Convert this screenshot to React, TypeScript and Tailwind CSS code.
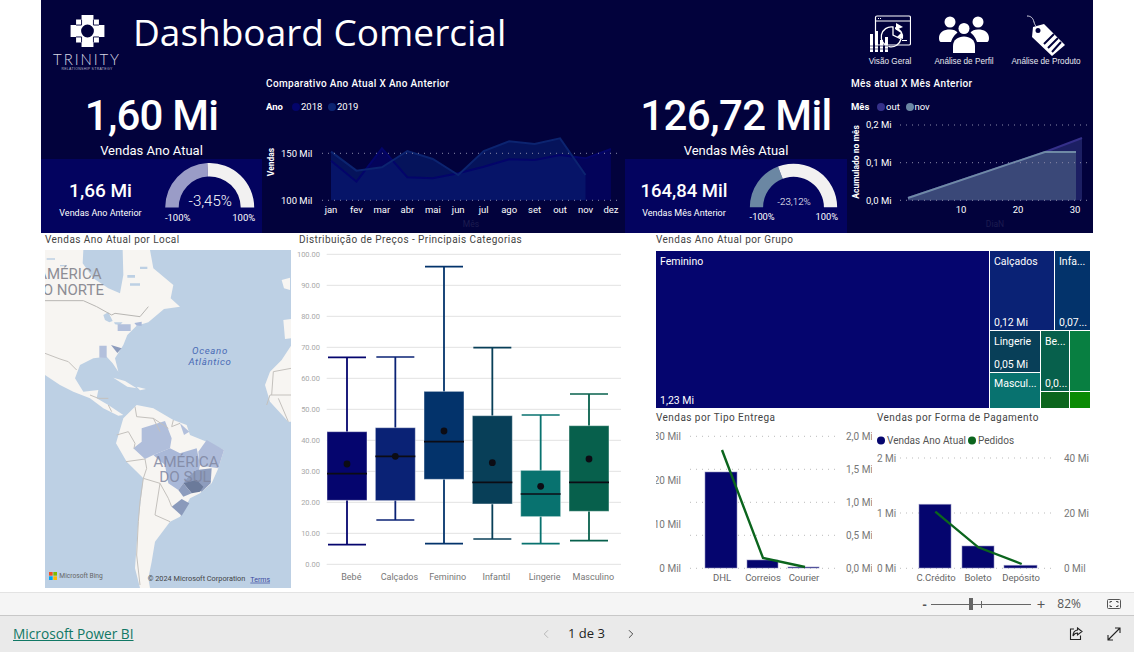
import { ChevronLeft, ChevronRight } from "lucide-react";

const din = "Roboto, sans-serif";

const months = ["jan", "fev", "mar", "abr", "mai", "jun", "jul", "ago", "set", "out", "nov", "dez"];
const y2018 = [272, 335, 235, 322, 325, 310, 290, 268, 270, 255, 265, 237];
const y2019 = [245, 302, 292, 243, 267, 315, 243, 214, 222, 205, 315];

const monthX = (i: number) => 331 + i * 25.45;
const monthY = (z: number) => 70 + z / 3;
const toLine = (vals: number[]) => vals.map((v, i) => `${monthX(i)},${monthY(v)}`).join(" ");
const toArea = (vals: number[]) =>
  `${monthX(0)},200.3 ${toLine(vals)} ${monthX(vals.length - 1)},200.3`;

const boxes = [
  { name: "Bebé", cx: 156, lx: 169, hi: 367, q3: 590, q1: 796, lo: 929, med: 716, mean: 687, color: "#05056e" },
  { name: "Calçados", cx: 301, lx: 313, hi: 366, q3: 578, q1: 797, lo: 855, med: 664, mean: 664, color: "#0a2275" },
  { name: "Feminino", cx: 447, lx: 458, hi: 95, q3: 469, q1: 733, lo: 926, med: 620, mean: 588, color: "#03336b" },
  { name: "Infantil", cx: 592, lx: 604, hi: 338, q3: 542, q1: 807, lo: 912, med: 742, mean: 683, color: "#083f58" },
  { name: "Lingerie", cx: 737, lx: 749, hi: 540, q3: 706, q1: 845, lo: 926, med: 777, mean: 754, color: "#08726f" },
  { name: "Masculino", cx: 882, lx: 895, hi: 477, q3: 572, q1: 829, lo: 917, med: 742, mean: 672, color: "#07604c" },
];

function arc(cx: number, cy: number, R: number, r: number, a0: number, a1: number) {
  const pt = (rad: number, a: number) => {
    const t = (Math.PI * a) / 180;
    return `${cx - rad * Math.cos(t)} ${cy - rad * Math.sin(t)}`;
  };
  return `M${pt(R, a0)} A${R} ${R} 0 0 1 ${pt(R, a1)} L${pt(r, a1)} A${r} ${r} 0 0 0 ${pt(r, a0)} Z`;
}

function Gauge({ box, cx, cy, split, color, label, labelSize }: {
  box: string; cx: number; cy: number; split: number; color: string; label: string; labelSize: number;
}) {
  return (
    <svg viewBox={box} width={102} height={74} className="shrink-0">
      <path d={arc(cx, cy, 44.5, 31, 0, split)} fill={color} />
      <path d={arc(cx, cy, 44.5, 31, split, 180)} fill="#f2f1f1" />
      <text x={cx + 0.5} y={cy - 2} textAnchor="middle" fontFamily={din} fontWeight={300} fontSize={labelSize} fill="#fff">{label}</text>
      <text x={cx - 32} y={220.5} textAnchor="middle" fontFamily={din} fontSize={9.5} fill="#fff">-100%</text>
      <text x={cx + 34} y={220.5} textAnchor="middle" fontFamily={din} fontSize={9.5} fill="#fff">100%</text>
    </svg>
  );
}

function Logo() {
  return (
    <div className="flex w-[92px] shrink-0 flex-col items-center pt-[15px] text-white">
      <svg width="37" height="35" viewBox="0 0 37 35">
        <path
          fillRule="evenodd"
          fill="#fff"
          d="M12 0H25V5H31V11H37V24H31V30H25V35H12V30H6V24H0V11H6V5H12Z M18.5 10.5A7 7 0 1 0 18.5 24.5A7 7 0 1 0 18.5 10.5Z"
        />
        <path d="M6 11H12M25 11H31M6 24H12M25 24H31M12 5V11M25 5V11M12 24V30M25 24V30" stroke="#02023c" strokeWidth="1" />
      </svg>
      <div className="mt-[5px] font-['Lato',sans-serif] text-[15px] font-light leading-[15px] tracking-[1.9px] text-[#d8d8e4]">TRINITY</div>
      <div className="whitespace-nowrap font-['Liberation_Sans',sans-serif] text-[3.5px] leading-[5px] tracking-[0.3px] text-[#b5b5c8]">RELATIONSHIP STRATEGY</div>
    </div>
  );
}

function NavIcon({ label, width, children }: { label: string; width: string; children: React.ReactNode }) {
  return (
    <div className={`flex flex-col items-center ${width}`}>
      <div className="flex h-[40px] items-end">{children}</div>
      <span className="mt-[3px] whitespace-nowrap font-['Liberation_Sans',sans-serif] text-[8.2px] leading-[12px] text-[#e8e8f0]">{label}</span>
    </div>
  );
}

function TopNav() {
  return (
    <div className="ml-auto flex pr-[3px] pt-[13px]">
      <NavIcon label="Visão Geral" width="w-[72px]">
        <svg width="42" height="38" viewBox="0 0 42 38" fill="none" stroke="#fff">
          <rect x="6.5" y="1" width="35" height="29" rx="1.5" strokeWidth="1.2" />
          <path d="M6.5 6H41.5" strokeWidth="1.2" />
          <path d="M9 3.5H13" strokeWidth="1" strokeDasharray="1 1" />
          <path d="M27 8 L34 12 L27 15Z" fill="#fff" stroke="none" />
          <path d="M24 12A10 10 0 1 0 32 24L24 20Z" strokeWidth="1.3" />
          <path d="M26 14L32 18 L28 22 L34 24A10 10 0 0 0 26 12Z" fill="#fff" stroke="none" />
          <path d="M33 25.5H38" strokeWidth="1" />
          <path d="M1 19h3v18H1z M6 16h3v21H6z M11 25h3v12h-3z M16 22h3v15h-3z" fill="#fff" stroke="none" />
          <path d="M0 31H20M0 34H20" stroke="#02023c" strokeWidth="0.6" />
        </svg>
      </NavIcon>
      <NavIcon label="Análise de Perfil" width="w-[76px]">
        <svg width="50" height="37" viewBox="0 0 50 37" fill="#fff">
          <circle cx="11" cy="6" r="5.5" />
          <circle cx="39" cy="6" r="5.5" />
          <circle cx="25" cy="12.5" r="5.5" />
          <path d="M0 22C0 16 5 13.5 11 13.5C14.5 13.5 17 14.5 18.5 16.5C16.5 18.5 14 20 12 26H2C0.5 26 0 24 0 22Z" />
          <path d="M50 22C50 16 45 13.5 39 13.5C35.5 13.5 33 14.5 31.5 16.5C33.5 18.5 36 20 38 26H48C49.5 26 50 24 50 22Z" />
          <path d="M14 37V30C14 24 19 20.5 25 20.5C31 20.5 36 24 36 30V37Z" />
        </svg>
      </NavIcon>
      <NavIcon label="Análise de Produto" width="w-[88px]">
        <svg width="42" height="42" viewBox="0 0 42 42" className="translate-y-[4px]">
          <path d="M2 1C6 1 8 3 9 7C9.5 9 10 10 11 11" fill="none" stroke="#d8d8e4" strokeWidth="1" />
          <path fillRule="evenodd" fill="#fff" d="M8 12L19 9L40 30L27 41L7 22Z M13 13A2.4 2.4 0 1 0 13 18A2.4 2.4 0 1 0 13 13Z" />
          <path d="M19 29L29 19M23 33L33 23M27 37L36 27" stroke="#02023c" strokeWidth="2" />
        </svg>
      </NavIcon>
    </div>
  );
}

function KpiColumn({ width, value, valueClass, label, subValue, subValueClass, subLabel, leftWidth, children }: {
  width: string; value: string; valueClass: string; label: string; subValue: string; subValueClass: string;
  subLabel: string; leftWidth: string; children: React.ReactNode;
}) {
  return (
    <div className={`flex shrink-0 flex-col text-white ${width}`}>
      <div className="flex h-[87px] flex-col items-center pt-[22px] font-['Roboto',sans-serif]">
        <div className={`h-[44px] whitespace-nowrap leading-[44px] ${valueClass}`}>{value}</div>
        <div className="mt-[5px] text-[13px] leading-4">{label}</div>
      </div>
      <div className="flex h-[74px] bg-[#03035f] font-['Roboto',sans-serif]">
        <div className={`flex shrink-0 flex-col items-center pt-[20px] ${leftWidth}`}>
          <div className={`h-[24px] whitespace-nowrap leading-[24px] ${subValueClass}`}>{subValue}</div>
          <div className="mt-[4px] whitespace-nowrap text-[9px] leading-[12px]">{subLabel}</div>
        </div>
        {children}
      </div>
    </div>
  );
}

function ChartHeader({ title, legendTitle, items }: {
  title: string; legendTitle: string; items: { label: string; color: string; w: string }[];
}) {
  return (
    <div className="pl-[4px] pt-[5px] font-['Roboto',sans-serif] text-white">
      <div className="whitespace-nowrap text-[10px] font-medium leading-[14px] tracking-[0.35px]">{title}</div>
      <div className="mt-[9px] flex h-[14px] items-center text-[9.5px] leading-[14px]">
        <span className="w-[26px] font-bold">{legendTitle}</span>
        {items.map((it) => (
          <span key={it.label} className={`flex items-center gap-[1px] ${it.w}`}>
            <span className="h-[8px] w-[8px] rounded-full" style={{ background: it.color }} />
            {it.label}
          </span>
        ))}
      </div>
    </div>
  );
}

function YearChart() {
  return (
    <svg viewBox="262 114 363 119" width={363} height={119} fontFamily={din}>
      <polygon points={toArea(y2018)} fill="#03035a" />
      <polygon points={toArea(y2019)} fill="#0a2275" fillOpacity={0.55} />
      <polyline points={toLine(y2018)} fill="none" stroke="#03046a" strokeWidth={2} />
      <polyline points={toLine(y2019)} fill="none" stroke="#0c2470" strokeWidth={2} />
      {[153.3, 200.3].map((y) => (
        <line key={y} x1={322} x2={618} y1={y} y2={y} stroke="#8a8aa8" strokeWidth={1} strokeDasharray="1 5" />
      ))}
      <text x={281} y={157} fontSize={9.5} fill="#fff">150 Mil</text>
      <text x={281} y={204} fontSize={9.5} fill="#fff">100 Mil</text>
      <text x={0} y={0} transform="translate(274,162) rotate(-90)" textAnchor="middle" fontSize={8.5} fontWeight={700} fill="#fff">Vendas</text>
      {months.map((m, i) => (
        <text key={m} x={monthX(i)} y={213} textAnchor="middle" fontSize={9.5} fill="#fff">{m}</text>
      ))}
      <text x={471} y={227} textAnchor="middle" fontSize={8.5} fill="#1c1c50">Mês</text>
    </svg>
  );
}

function MonthChart() {
  return (
    <svg viewBox="847 114 246 119" width={246} height={119} fontFamily={din}>
      <polygon points="908,200.3 908,198 1045,152 1082,138 1082,200.3" fill="#1c1f63" />
      <polygon points="908,200.3 908,198 1045,152 1076,152 1076,200.3" fill="#3a4878" />
      <polyline points="908,198 1045,152 1082,138" fill="none" stroke="#35308a" strokeWidth={2} />
      <polyline points="908,198 1045,152 1076,152" fill="none" stroke="#6f8aa5" strokeWidth={2} />
      {[125, 162.7, 200.3].map((y) => (
        <line key={y} x1={900} x2={1090} y1={y} y2={y} stroke="#8a8aa8" strokeWidth={1} strokeDasharray="1 5" />
      ))}
      <text x={866} y={128} fontSize={9.5} fill="#fff">0,2 Mi</text>
      <text x={866} y={166} fontSize={9.5} fill="#fff">0,1 Mi</text>
      <text x={866} y={204} fontSize={9.5} fill="#fff">0,0 Mi</text>
      <text x={0} y={0} transform="translate(859,162) rotate(-90)" textAnchor="middle" fontSize={8.5} fontWeight={700} fill="#fff">Acumulado no mês</text>
      {[["10", 961], ["20", 1018], ["30", 1075]].map(([t, x]) => (
        <text key={t} x={x} y={213} textAnchor="middle" fontSize={9.5} fill="#fff">{t}</text>
      ))}
      <text x={995} y={227} textAnchor="middle" fontSize={8.5} fill="#1c1c50">DiaN</text>
    </svg>
  );
}

function Header() {
  return (
    <header className="flex h-[233px] flex-col bg-[#02023c]">
      <div className="flex h-[72px]">
        <Logo />
        <h1 className="pt-[7px] font-['Open_Sans',sans-serif] text-[37px] leading-[50px] text-white">Dashboard Comercial</h1>
        <TopNav />
      </div>
      <div className="flex h-[161px]">
        <KpiColumn width="w-[221px]" value="1,60 Mi" valueClass="text-[42px] font-medium tracking-[-0.8px]" label="Vendas Ano Atual"
          subValue="1,66 Mi" subValueClass="text-[19px] font-medium" subLabel="Vendas Ano Anterior" leftWidth="w-[119px]">
          <Gauge box="160 159 102 74" cx={209.7} cy={207.5} split={86.9} color="#9a9cc7" label="-3,45%" labelSize={15} />
        </KpiColumn>
        <div className="flex w-[363px] shrink-0 flex-col">
          <ChartHeader title="Comparativo Ano Atual X Ano Anterior" legendTitle="Ano"
            items={[{ label: "2018", color: "#03046a", w: "w-[36px]" }, { label: "2019", color: "#0c2470", w: "w-[36px]" }]} />
          <YearChart />
        </div>
        <KpiColumn width="w-[222px]" value="126,72 Mil" valueClass="text-[42px] font-medium tracking-[-0.6px]" label="Vendas Mês Atual"
          subValue="164,84 Mil" subValueClass="text-[18.5px] font-medium" subLabel="Vendas Mês Anterior" leftWidth="w-[118px]">
          <Gauge box="743 159 104 74" cx={794.5} cy={207.5} split={69.2} color="#6b87a3" label="-23,12%" labelSize={10} />
        </KpiColumn>
        <div className="flex w-[246px] shrink-0 flex-col">
          <ChartHeader title="Mês atual X Mês Anterior" legendTitle="Mês"
            items={[{ label: "out", color: "#35308a", w: "w-[28.5px]" }, { label: "nov", color: "#6b87a3", w: "w-[28.5px]" }]} />
          <MonthChart />
        </div>
      </div>
    </header>
  );
}

function SectionTitle({ children }: { children: React.ReactNode }) {
  return (
    <div className="whitespace-nowrap font-['Roboto',sans-serif] text-[10px] leading-[12px] tracking-[0.45px] text-[#444]">{children}</div>
  );
}

function MapChart() {
  const land = "#f7f5f2";
  const border = "#c4c1bd";
  return (
    <svg viewBox="15 45 738 1014" width={246} height={338} className="block" fontFamily={din}>
      <rect x="15" y="45" width="738" height="1014" fill="#bdd0e4" />
      {/* north america */}
      <path fill={land} d="M15 45H130L128 85L160 130L205 160L240 175L250 120L248 45H330L340 100L400 150L392 190L420 215L372 222L325 262L290 272L262 300L250 330L225 370L235 410L218 385L200 365L160 370L120 390L105 430L130 470L175 465L170 490L205 510L250 540L235 542L190 520L150 490L100 470L60 450L15 420Z" />
      <path fill="#bdd0e4" d="M190 240L205 232L218 258L208 262L195 255Z M222 262L248 262L240 270L225 268Z M20 70H45V74H20Z M60 90H80V94H60Z M262 120H285V128H262Z M270 145H300V152H270Z M300 95H322V102H300Z" />
      <path fill={land} d="M220 428L255 438L290 460L262 455ZM290 455L318 462L300 466ZM725 135L750 128V165L732 160ZM730 255L753 252V310L735 312Z" />
      {/* africa */}
      <path fill={land} d="M753 332L725 375L690 410L675 450L690 500L745 560H753Z" />
      {/* south america */}
      <path fill={land} d="M290 510L340 520L400 555L440 570L450 600L500 620L552 645L535 700L515 745L480 775L450 790L420 845L390 860L345 920L335 980L325 1030L330 1059H300L285 1000L295 860L310 730L260 680L228 625L250 550Z" />
      {/* states filled */}
      <path fill="#b0bedb" d="M305 580L375 558L395 610L390 640L340 660L315 672L280 640L305 620Z" />
      <path fill="#b3c0dc" d="M420 565L448 590L432 600Z" />
      <path fill="#a9b8d8" d="M340 660L390 640L420 655L470 640L480 690L470 735L430 745L415 765L385 745L375 690Z" />
      <path fill="#afbcda" d="M500 615L552 645L535 700L505 695L478 690L475 650Z" />
      <path fill="#8d9cbd" d="M470 705L515 700L512 745L485 770L455 750L430 745L445 725Z" />
      <path fill="#6b7a9a" d="M430 745L470 735L490 755L480 770L455 775Z" />
      <path fill="#8d9cbd" d="M415 765L430 745L455 775L430 785Z" />
      <path fill="#8a9abb" d="M395 815L425 792L448 805L425 842Z" />
      <path fill="#b3c0dc" d="M233 268H272V288H233ZM178 332H200V368H178Z" />
      <path fill="#8d9cbd" d="M213 330L245 340L232 354Z" />
      <path fill="#a9b8d8" d="M283 264L305 260V272L290 272Z" />
      {/* borders */}
      <g fill="none" stroke={border} strokeWidth="3">
        <path d="M15 197H130L170 215L215 240L225 235L300 245L325 215" stroke="#b8b6b3" />
        <path d="M15 355L60 372L85 380L110 405" />
        <path d="M150 480L175 490L205 490M205 510L215 530" />
        <path d="M285 515L290 545L340 550L370 570L385 580M340 550L360 590M400 555L395 575L420 565" />
        <path d="M230 600L265 590L285 625L282 640M258 680L315 672L320 700L310 730L360 745L385 790L395 815" />
        <path d="M310 730L300 800L295 860L290 960L300 1050M360 745L345 840L390 860" />
        <path d="M753 480H690L680 510M753 400L700 410L695 480M715 490L745 560" />
      </g>
      <g fontFamily="Roboto, sans-serif" fontSize="45" fill="#8d8d95" textAnchor="middle">
        <text x="88" y="133">AMÉRICA</text>
        <text x="100" y="179">O NORTE</text>
      </g>
      <g fontSize="46" fill="#7f86a0" fillOpacity="0.85" textAnchor="middle">
        <text x="438" y="695">AMÉRICA</text>
        <text x="435" y="742">DO SUL</text>
      </g>
      <g fontSize="29" fontStyle="italic" fill="#4a6bb5" textAnchor="middle" letterSpacing="2">
        <text x="510" y="358">Oceano</text>
        <text x="510" y="390">Atlântico</text>
      </g>
      <rect x="27" y="1011" width="11" height="11" fill="#f25022" />
      <rect x="40" y="1011" width="11" height="11" fill="#7fba00" />
      <rect x="27" y="1024" width="11" height="11" fill="#00a4ef" />
      <rect x="40" y="1024" width="11" height="11" fill="#ffb900" />
      <text x="58" y="1030" fontSize="20" fill="#666">Microsoft Bing</text>
      <text x="323" y="1038" fontSize="22" fill="#444">© 2024 Microsoft Corporation</text>
      <text x="631" y="1040" fontSize="21" fill="#3a4aa0" textDecoration="underline">Terms</text>
    </svg>
  );
}

function BoxPlot() {
  const ticks = [100, 90, 80, 70, 60, 50, 40, 30, 20, 10, 0];
  const px = (z: number) => 4 + z / 3;
  const py = (z: number) => z / 3 - 15;
  return (
    <svg viewBox="0 0 359 338" width={359} height={338} className="block" fontFamily={din}>
      {ticks.map((t, i) => {
        const z = 58 + i * 93;
        return (
          <g key={t}>
            <line x1={px(95)} x2={px(978)} y1={py(z)} y2={py(z)} stroke="#e2e2e2" strokeWidth={1} />
            <text x={px(75)} y={py(z) + 2.5} textAnchor="end" fontSize={7.5} fill="#a8a8a8">{t}.00</text>
          </g>
        );
      })}
      {boxes.map((b) => (
        <g key={b.name}>
          <line x1={px(b.cx)} x2={px(b.cx)} y1={py(b.hi)} y2={py(b.lo)} stroke={b.color} strokeWidth={1.8} />
          <line x1={px(b.cx - 57)} x2={px(b.cx + 57)} y1={py(b.hi)} y2={py(b.hi)} stroke={b.color} strokeWidth={1.6} />
          <line x1={px(b.cx - 57)} x2={px(b.cx + 57)} y1={py(b.lo)} y2={py(b.lo)} stroke={b.color} strokeWidth={1.6} />
          <rect x={px(b.cx - 60)} y={py(b.q3)} width={40} height={(b.q1 - b.q3) / 3} fill={b.color} stroke="#ffffff" strokeOpacity={0.45} strokeWidth={1} />
          <line x1={px(b.cx - 60)} x2={px(b.cx + 60)} y1={py(b.med)} y2={py(b.med)} stroke="#0c0c14" strokeWidth={1.6} />
          <circle cx={px(b.cx)} cy={py(b.mean)} r={3.4} fill="#0c0c14" />
          <text x={px(b.lx)} y={py(1025) + 3.5} textAnchor="middle" fontSize={9} fill="#777">{b.name}</text>
        </g>
      ))}
    </svg>
  );
}

function Cell({ label, value, className }: { label?: string; value?: string; className: string }) {
  return (
    <div className={`flex flex-col justify-between overflow-hidden px-[4px] pb-[1px] pt-[4px] font-['Roboto',sans-serif] text-[10.5px] leading-[13px] text-white ${className}`}>
      <span className="whitespace-nowrap">{label}</span>
      <span className="whitespace-nowrap">{value}</span>
    </div>
  );
}

function Treemap() {
  return (
    <div className="flex h-[157px] w-[434px] gap-px">
      <Cell label="Feminino" value="1,23 Mi" className="w-[333px] bg-[#05056e]" />
      <div className="flex w-[100px] flex-col gap-px">
        <div className="flex h-[79px] gap-px">
          <Cell label="Calçados" value="0,12 Mi" className="w-[64px] bg-[#0a2275]" />
          <Cell label="Infa..." value="0,07..." className="flex-1 bg-[#03336b]" />
        </div>
        <div className="flex flex-1 gap-px">
          <div className="flex w-[50px] flex-col gap-px">
            <Cell label="Lingerie" value="0,05 Mi" className="h-[41px] bg-[#083f58]" />
            <Cell label="Mascul..." className="flex-1 bg-[#08726f]" />
          </div>
          <div className="flex w-[28px] flex-col gap-px">
            <Cell label="Be..." value="0,0..." className="h-[60px] bg-[#07604c]" />
            <div className="flex-1 bg-[#0b651d]" />
          </div>
          <div className="flex flex-1 flex-col gap-px">
            <div className="h-[60px] bg-[#087f41]" />
            <div className="flex-1 bg-[#0a8a05]" />
          </div>
        </div>
      </div>
    </div>
  );
}

function Bar({ x, w, top }: { x: number; w: number; top: number }) {
  return <rect x={x} y={top} width={w} height={568 - top} fill="#05056e" stroke="#8f8fc0" strokeOpacity={0.7} strokeWidth={0.8} />;
}

function DeliveryChart() {
  const dots = [436.3, 469.3, 502.3, 535.3, 568.3];
  return (
    <svg viewBox="650 424 222 168" width={222} height={168} className="block" fontFamily={din}>
      <clipPath id="delivery-axis"><rect x={656} y={424} width={40} height={168} /></clipPath>
      {dots.map((y) => (
        <line key={y} x1={690} x2={838} y1={y} y2={y} stroke="#bbb" strokeDasharray="1 5" />
      ))}
      <Bar x={705} w={32} top={472} />
      <Bar x={747} w={31} top={560} />
      <Bar x={788} w={31} top={567} />
      <polyline points="722,450 763,558 805,567" fill="none" stroke="#0b651d" strokeWidth={2.4} />
      <g clipPath="url(#delivery-axis)">
        {[["30 Mil", 439.5], ["20 Mil", 483.5], ["10 Mil", 527.5], ["0 Mil", 571.5]].map(([t, y]) => (
          <text key={t} x={681} y={y} textAnchor="end" fontSize={10} fill="#777">{t}</text>
        ))}
      </g>
      {[["2,0 Mi", 439.5], ["1,5 Mi", 472.5], ["1,0 Mi", 505.5], ["0,5 Mi", 538.5], ["0,0 Mi", 571.5]].map(([t, y]) => (
        <text key={t} x={846} y={y} fontSize={10} fill="#777">{t}</text>
      ))}
      {[["DHL", 722], ["Correios", 763], ["Courier", 804]].map(([t, x]) => (
        <text key={t} x={x} y={580.5} textAnchor="middle" fontSize={9.5} fill="#666">{t}</text>
      ))}
    </svg>
  );
}

function PaymentChart() {
  return (
    <svg viewBox="872 424 221 168" width={221} height={168} className="block" fontFamily={din}>
      <circle cx={881} cy={440.5} r={4} fill="#05056e" />
      <text x={887} y={444} fontSize={10} fill="#555">Vendas Ano Atual</text>
      <circle cx={972} cy={440.5} r={4} fill="#0b651d" />
      <text x={978} y={444} fontSize={10} fill="#555">Pedidos</text>
      {[458, 513, 568.3].map((y) => (
        <line key={y} x1={900} x2={1055} y1={y} y2={y} stroke="#bbb" strokeDasharray="1 5" />
      ))}
      <Bar x={919} w={32} top={504.3} />
      <Bar x={962} w={32} top={546} />
      <Bar x={1004} w={33} top={565.3} />
      <polyline points="935.3,511.7 978.3,547.3 1021.7,564" fill="none" stroke="#0b651d" strokeWidth={2.4} />
      {[["2 Mi", 461.5], ["1 Mi", 516.5], ["0 Mi", 571.5]].map(([t, y]) => (
        <text key={t} x={877} y={y} fontSize={10} fill="#777">{t}</text>
      ))}
      {[["40 Mi", 461.5], ["20 Mi", 516.5], ["0 Mil", 571.5]].map(([t, y]) => (
        <text key={t} x={1064} y={y} fontSize={10} fill="#777">{t}</text>
      ))}
      {[["C.Crédito", 936], ["Boleto", 978], ["Depósito", 1021]].map(([t, x]) => (
        <text key={t} x={x} y={580.5} textAnchor="middle" fontSize={9.5} fill="#666">{t}</text>
      ))}
    </svg>
  );
}

function ZoomBar() {
  return (
    <div className="flex h-[23px] items-center justify-end border-b border-[#c8c8c8] bg-[#f5f5f5] font-['Open_Sans',sans-serif] text-[#555]">
      <span className="mr-[4px] text-[13px] font-bold leading-none">-</span>
      <div className="relative h-px w-[100px] bg-[#666]">
        <span className="absolute left-[38px] top-[-6px] h-[12px] w-[4px] bg-[#666]" />
        <span className="absolute left-[50px] top-[-3px] h-[7px] w-px bg-[#666]" />
      </div>
      <span className="ml-[6px] text-[15px] leading-none">+</span>
      <span className="ml-[12px] text-[12px]">82%</span>
      <svg className="ml-[26px] mr-[13px]" width="14" height="10" viewBox="0 0 14 10" fill="none" stroke="#555">
        <rect x="0.5" y="0.5" width="13" height="9" rx="1" />
        <path d="M3 4V2.5H5M9 2.5H11V4M11 6V7.5H9M5 7.5H3V6" />
      </svg>
    </div>
  );
}

function FooterBar() {
  return (
    <div className="flex flex-1 items-center bg-[#eaeaea] pl-[13px] pr-[13px]">
      <a className="w-[522px] font-['Open_Sans',sans-serif] text-[13.7px] text-[#117865] underline">Microsoft Power BI</a>
      <ChevronLeft size={14} strokeWidth={1.5} color="#b0b0b0" className="ml-[4px]" />
      <span className="ml-[15px] font-['Open_Sans',sans-serif] text-[13px] text-[#222]">1 de 3</span>
      <ChevronRight size={14} strokeWidth={1.5} color="#333" className="ml-[19px]" />
      <div className="ml-auto flex items-center gap-[24px]">
        <svg width="14" height="14" viewBox="0 0 14 14" fill="none" stroke="#222" strokeWidth="1.1">
          <path d="M5 2H1.5V12.5H11.5V8.5" />
          <path d="M8.5 1L13 4.5L8.5 8V6C6.5 6 5 7 4 9C4 6 5.5 3.5 8.5 3Z" />
        </svg>
        <svg width="14" height="14" viewBox="0 0 14 14" fill="none" stroke="#222" strokeWidth="1.1">
          <path d="M8 1H13V6M13 1L1 13M1 8V13H6" />
        </svg>
      </div>
    </div>
  );
}

export default function App() {
  return (
    <div className="flex h-[652px] w-[1134px] flex-col overflow-hidden bg-white">
      <main className="h-[592px] px-[41px]">
        <Header />
        <div className="flex h-[359px]">
          <section className="w-[250px] shrink-0 pl-[4px] pt-px">
            <SectionTitle>Vendas Ano Atual por Local</SectionTitle>
            <div className="mt-[4px]"><MapChart /></div>
          </section>
          <section className="w-[359px] shrink-0 pt-px">
            <div className="pl-[8px]"><SectionTitle>Distribuição de Preços - Principais Categorias</SectionTitle></div>
            <div className="mt-[4px]"><BoxPlot /></div>
          </section>
          <section className="flex-1 pt-px">
            <div className="pl-[6px]">
              <SectionTitle>Vendas Ano Atual por Grupo</SectionTitle>
              <div className="mt-[5px]"><Treemap /></div>
            </div>
            <div className="flex">
              <div className="w-[222px]">
                <div className="pl-[6px] pt-[4px]"><SectionTitle>Vendas por Tipo Entrega</SectionTitle></div>
                <DeliveryChart />
              </div>
              <div className="w-[221px]">
                <div className="pl-[5px] pt-[4px]"><SectionTitle>Vendas por Forma de Pagamento</SectionTitle></div>
                <PaymentChart />
              </div>
            </div>
          </section>
        </div>
      </main>
      <div className="border-t border-[#e3e3e3]"><ZoomBar /></div>
      <FooterBar />
    </div>
  );
}
